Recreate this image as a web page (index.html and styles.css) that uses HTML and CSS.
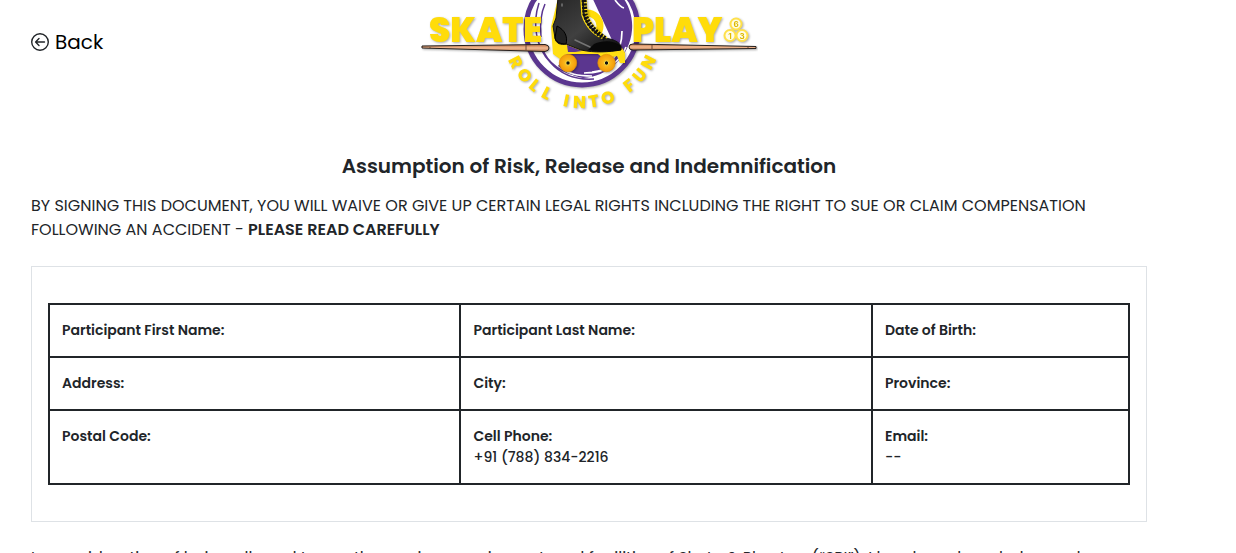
FILE: index.html
```html
<!DOCTYPE html>
<html lang="en">
<head>
<meta charset="utf-8">
<meta name="viewport" content="width=device-width, initial-scale=1">
<title>Assumption of Risk, Release and Indemnification</title>
<link rel="stylesheet" href="styles.css">
</head>
<body>
<main class="page">
  <header class="header">
    <a class="back" href="#">
      <svg class="back-icon" viewBox="0 0 18 18" aria-hidden="true"><circle cx="9" cy="9" r="8.3"/><path d="M13.5 9H4.8M8 5.6L4.6 9L8 12.4"/></svg>
      <span>Back</span>
    </a>
    <svg class="logo" viewBox="420 0 338 124" role="img" aria-label="Skate &amp; Play, Roll into Fun">
      <defs>
        <linearGradient id="wood" x1="0" y1="0" x2="0" y2="1"><stop offset="0" stop-color="#b86f45"/><stop offset=".5" stop-color="#f5bb91"/><stop offset="1" stop-color="#b87850"/></linearGradient>
        <linearGradient id="leather" x1="0" y1="0" x2="1" y2="1"><stop offset="0" stop-color="#252525"/><stop offset=".5" stop-color="#404040"/><stop offset="1" stop-color="#080808"/></linearGradient>
        <radialGradient id="wheel"><stop offset="0" stop-color="#ffc928"/><stop offset="1" stop-color="#f39a08"/></radialGradient>
      </defs>
      <g class="shade">
        <circle cx="582" cy="29" r="56" fill="#fff" stroke="#5b368f" stroke-width="5"/>
        <path d="M584 -20C620 -20 634 8 632 30C630 57 607 77 583 78C573 76 565 72 558 66L567 54L618 53Z" fill="#5b368f"/>
        <path d="M539 3C532 24 536 47 550 62C563 77 578 80 594 79M542 47C547 64 563 74 582 76M545 4C540 15 540 26 541 37" fill="none" stroke="#5b368f" stroke-width="1.500"/>
        <path d="M615 0C618 4 620 7 624 8M622 31C622 44 618 53 613 59M626 47C620 62 608 70 592 72M612 65C605 71 597 73 584 73M562 68C569 74 577 76 592 76" fill="none" stroke="#fff" stroke-width="1.700"/>
        <circle cx="587" cy="26" r="13" fill="#fff" stroke="#ffdc0a" stroke-width="7"/>
      </g>
      <g class="shade">
        <path d="M558 -2L551 27L553 54L560 59L566 54H598L604 59L617 56L620 63H625V53L622 48L590 28L584 -2Z" fill="#ffdf12"/>
        <path d="M567 45L582 51L575 52H568Z" fill="#5b368f"/>
        <path d="M558 -2L556 18L553 26L555 38C556 44 561 45 566 44L581 50C595 53 609 52 621 50C623 43 614 39 604 38C594 32 586 23 584 13L583 -2Z" fill="url(#leather)" stroke="#111" stroke-width="1"/>
        <path d="M594 44C603 40 614 40 621 46L621 50C611 52 598 52 588 50Z" fill="#080808"/>
        <path d="M557 26C565 30 568 37 566 44C560 44 556 42 555 38Z" fill="#222" stroke="#000"/>
        <path d="M581 -1L582 15C586 27 594 35 604 39M586 -1L587 14C590 24 598 32 607 38" fill="none" stroke="#ffdf12" stroke-width="1.400"/>
        <path d="M584 0L585 14C588 25 596 33 606 39" fill="none" stroke="#101010" stroke-width="5" stroke-dasharray="2.200 1.200"/>
        <path d="M575 40L590 47M562 4V6" stroke="#757575" stroke-width="1.500" stroke-linecap="round"/>
        <g fill="url(#wheel)" stroke="#df920a" stroke-width=".7"><circle cx="568" cy="63" r="8.700"/><circle cx="606.500" cy="63" r="8.700"/></g>
        <g fill="#111" stroke="#ffe248" stroke-width="1"><circle cx="568" cy="63" r="2.200"/><circle cx="606.500" cy="63" r="2.200"/></g>
      </g>
      <g class="shade logo-text">
        <text class="logo-word" x="429" y="42">SKATE</text>
        <text class="logo-word" x="632" y="42">PLAY</text>
        <g class="logo-arc">
          <text x="582" y="108" transform="rotate(62 582 27)">R</text>
          <text x="582" y="108" transform="rotate(50 582 27)">O</text>
          <text x="582" y="108" transform="rotate(39 582 27)">L</text>
          <text x="582" y="108" transform="rotate(28 582 27)">L</text>
          <text x="582" y="108" transform="rotate(12 582 27)">I</text>
          <text x="582" y="108" transform="rotate(2 582 27)">N</text>
          <text x="582" y="108" transform="rotate(-9 582 27)">T</text>
          <text x="582" y="108" transform="rotate(-20 582 27)">O</text>
          <text x="582" y="108" transform="rotate(-39 582 27)">F</text>
          <text x="582" y="108" transform="rotate(-50 582 27)">U</text>
          <text x="582" y="108" transform="rotate(-62 582 27)">N</text>
        </g>
        <g fill="#fffce6" stroke="#ffe14a" stroke-width="2"><circle cx="736" cy="24" r="5.500"/><circle cx="730" cy="35.500" r="5.500"/><circle cx="742" cy="35.500" r="5.500"/></g>
        <g class="ball-number"><text x="736" y="27">6</text><text x="730" y="38.500">1</text><text x="742" y="38.500">3</text></g>
      </g>
      <g class="shade" stroke="#26201d" stroke-width="1">
        <path d="M422 46L545 44.500Q549 45 549 48Q549 51 545 51.500L422 48Z" fill="url(#wood)"/>
        <path d="M756 46.500L633 44Q629 44 629 47Q629 50 633 50L756 48.500Z" fill="url(#wood)"/>
        <path d="M526 45V51M652 45V50M430 47V48M748 47V48" stroke="#704b36"/>
      </g>
    </svg>
  </header>

  <h1 class="title">Assumption of Risk, Release and Indemnification</h1>
  <p class="notice">BY SIGNING THIS DOCUMENT, YOU WILL WAIVE OR GIVE UP CERTAIN LEGAL RIGHTS INCLUDING THE RIGHT TO SUE OR CLAIM COMPENSATION FOLLOWING AN ACCIDENT - <strong>PLEASE READ CAREFULLY</strong></p>

  <section class="card">
    <table class="details">
      <colgroup><col class="col-name"><col class="col-name"><col></colgroup>
      <tbody>
        <tr><td><strong>Participant First Name:</strong></td><td><strong>Participant Last Name:</strong></td><td><strong>Date of Birth:</strong></td></tr>
        <tr><td><strong>Address:</strong></td><td><strong>City:</strong></td><td><strong>Province:</strong></td></tr>
        <tr><td><strong>Postal Code:</strong></td><td><strong>Cell Phone:</strong><br>+91 (788) 834-2216</td><td><strong>Email:</strong><br>--</td></tr>
      </tbody>
    </table>
  </section>

  <p class="terms">In consideration of being allowed to use the services, equipment, and facilities of Skate &amp; Play Inc. (“SPI”), I hereby acknowledge and</p>
</main>
</body>
</html>
```
FILE: styles.css
```css
* { box-sizing: border-box; }

html { overflow: hidden; }

body {
  margin: 0;
  background: #fff;
  color: #212529;
  font-family: Poppins, Inter, sans-serif;
  font-size: 16px;
  line-height: 24px;
}

strong { font-weight: 600; }

.page { padding: 0 89px 0 31px; }

.header {
  display: grid;
  grid-template-columns: 1fr 338px 1fr;
  align-items: start;
}

.back {
  display: flex;
  align-items: center;
  gap: 6px;
  padding-top: 27px;
  color: #000;
  font-size: 20px;
  line-height: 30px;
  text-decoration: none;
}

.back-icon {
  width: 18px;
  height: 18px;
  fill: none;
  stroke: #212529;
  stroke-width: 1.4;
  stroke-linecap: round;
  stroke-linejoin: round;
}

.logo { display: block; width: 100%; }
.shade { filter: drop-shadow(1px 1px 1px #0005); }
.logo-text { fill: #ffdc0a; }
.logo-word { font: 900 34px Poppins, Inter, sans-serif; }
.logo-arc { font: 800 17px Poppins, Inter, sans-serif; text-anchor: middle; }
.ball-number { fill: #dcb900; font: 700 8px Inter, sans-serif; text-anchor: middle; }

.title {
  margin: 30px 0 16px;
  font-size: 20px;
  font-weight: 600;
  line-height: 24px;
  text-align: center;
}

.notice { margin: 0 0 24px; }

.card {
  padding: 36px 16px;
  border: 1px solid #dee2e6;
}

.details {
  width: 100%;
  border-collapse: collapse;
  table-layout: fixed;
  font-size: 14px;
  font-weight: 500;
  line-height: 21px;
}

.col-name { width: 38.1%; }

.details td {
  padding: 15px 12px;
  border: 2px solid #212529;
  vertical-align: top;
}

.terms { margin: 24px 0 0; white-space: nowrap; }
```
